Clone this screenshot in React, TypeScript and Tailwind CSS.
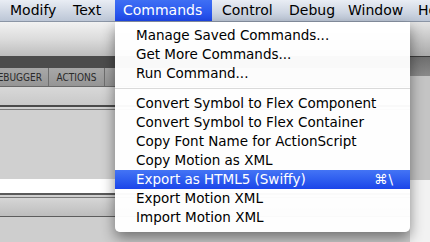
import React from "react";

const menuBar = [
  { label: "Modify", cls: "w-[64px] pl-[10px]" },
  { label: "Text", cls: "w-[51px] pl-[9px]" },
  { label: "Commands", cls: "w-[97px] pl-[8px] bg-gradient-to-b from-[#3f6ff4] to-[#1e47ea] text-white" },
  { label: "Control", cls: "w-[68px] pl-[10px]" },
  { label: "Debug", cls: "w-[59px] pl-[9px]" },
  { label: "Window", cls: "w-[70px] pl-[9px]" },
  { label: "Help", cls: "pl-[9px]" },
];

type Item = { label: string; shortcut?: string; active?: boolean } | "sep";

const items: Item[] = [
  { label: "Manage Saved Commands..." },
  { label: "Get More Commands..." },
  { label: "Run Command..." },
  "sep",
  { label: "Convert Symbol to Flex Component" },
  { label: "Convert Symbol to Flex Container" },
  { label: "Copy Font Name for ActionScript" },
  { label: "Copy Motion as XML" },
  { label: "Export as HTML5 (Swiffy)", shortcut: "⌘\\", active: true },
  { label: "Export Motion XML" },
  { label: "Import Motion XML" },
];

export default function App() {
  return (
    <div
      className="relative w-[430px] h-[242px] overflow-hidden bg-[#cfcfcf]"
      style={{ fontFamily: '"DejaVu Sans", "Liberation Sans", sans-serif' }}
    >
      {/* Menu bar */}
      <div className="h-[22px] flex items-stretch bg-gradient-to-b from-[#e9edf4] to-[#bcc6d6] border-b border-[#8b95a5] text-[14px] text-black whitespace-nowrap">
        {menuBar.map((m) => (
          <div key={m.label} className={`shrink-0 flex items-center ${m.cls}`}>
            {m.label}
          </div>
        ))}
      </div>

      {/* Application background */}
      <div className="flex h-[220px]">
        <div className="flex-1 flex flex-col">
          <div className="h-[34px] bg-gradient-to-b from-[#f2f2f2] via-[#dcdcdc] to-[#bdbdbd]" />
          <div className="h-[12px] bg-[#4c4c4c]" />
          <div
            className="h-[19px] flex bg-gradient-to-b from-[#a8a8a8] to-[#959595] border-b border-[#6a6a6a] text-[10px] text-[#2a2a2a]"
            style={{ fontFamily: '"DejaVu Sans Condensed", "Liberation Sans Narrow", "Liberation Sans", sans-serif' }}
          >
            <div className="w-[49px] flex items-center justify-end pr-[6px] border-r border-[#6e6e6e] overflow-hidden whitespace-nowrap">
              DEBUGGER
            </div>
            <div className="w-[56px] flex items-center justify-center border-r border-[#6e6e6e]">ACTIONS</div>
          </div>
          <div className="h-[20px] bg-gradient-to-b from-[#d8d8d8] to-[#c9c9c9] border-b-2 border-[#4a4a4a]" />
          <div className="h-[3px] bg-[#cfcfcf] border-b border-[#7a7a7a]" />
          <div className="h-[69px] bg-[#d0d0d0]" />
          <div className="h-[16px] bg-white border-b-2 border-[#5a5a5a]" />
          <div className="h-[3px] bg-[#cfcfcf] border-b border-[#777]" />
          <div className="h-[19px] bg-gradient-to-b from-[#d6d6d6] to-[#bdbdbd] border-b border-[#5d5d5d]" />
          <div className="flex-1 bg-[#cecece]" />
        </div>
        <div className="w-[20px] flex flex-col">
          <div className="h-[34px] bg-gradient-to-b from-[#e4e4e4] to-[#a9a9a9]" />
          <div className="h-[20px] bg-gradient-to-b from-[#6e6e6e] to-[#8a8a8a] border-t border-[#3a3a3a]" />
          <div className="h-[104px] bg-[#c4c4c4]" />
          <div className="flex-1 bg-[#f2f2f2]" />
        </div>
      </div>

      {/* Commands dropdown */}
      <div className="absolute left-[115px] top-[22px] w-[295px] pt-[4px] pb-[5px] bg-white/[0.97] rounded-b-[5px] shadow-[0_6px_14px_rgba(0,0,0,0.45)] text-[13.5px] text-black whitespace-nowrap">
        {items.map((it, i) =>
          it === "sep" ? (
            <div key={i} className="h-[11px] flex items-center">
              <div className="w-full h-px bg-[#dadada]" />
            </div>
          ) : (
            <div
              key={i}
              className={`h-[19px] flex items-center justify-between pl-[21px] pr-[16px] ${
                it.active ? "bg-gradient-to-b from-[#4474f5] to-[#1c44e9] text-white" : ""
              }`}
            >
              <span>{it.label}</span>
              {it.shortcut && <span className="tracking-[1px]">{it.shortcut}</span>}
            </div>
          )
        )}
      </div>
    </div>
  );
}
